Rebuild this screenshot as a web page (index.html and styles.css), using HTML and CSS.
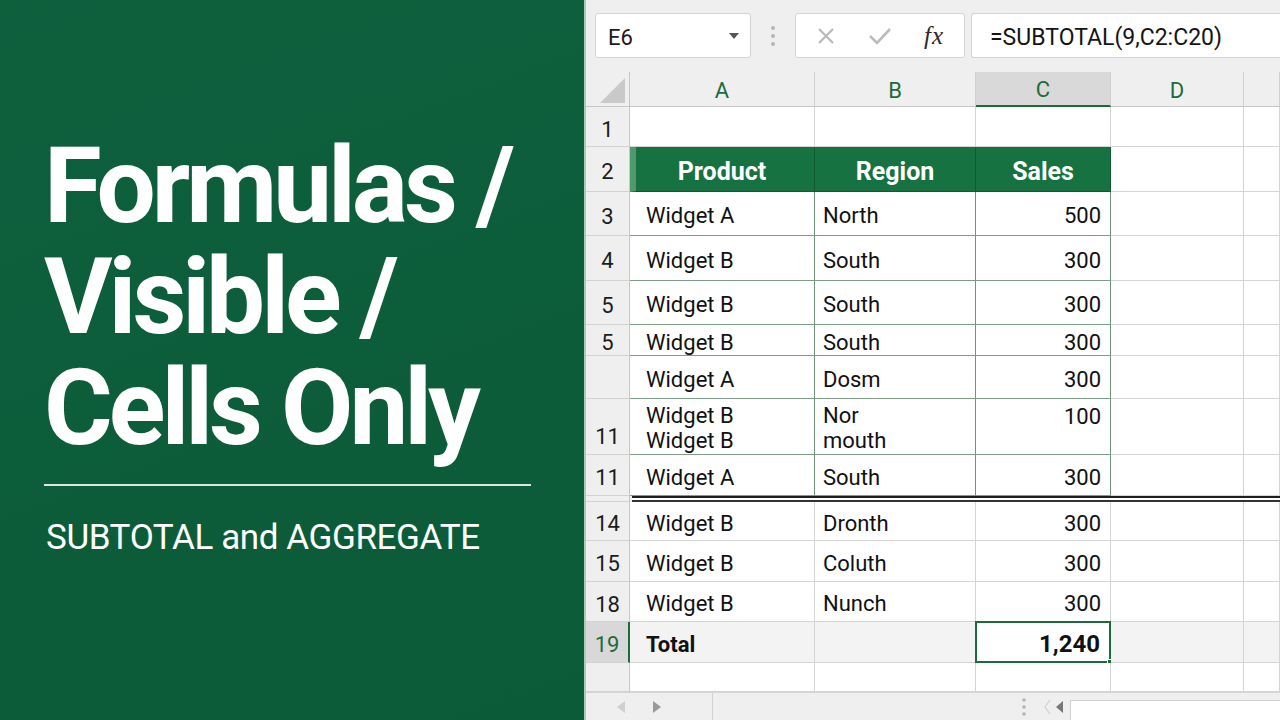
FILE: index.html
```html
<!DOCTYPE html>
<html>
<head>
<meta charset="utf-8">
<link rel="stylesheet" href="styles.css">
</head>
<body>
<div class="page">
  <section class="left">
    <h1 class="title">Formulas /<br>Visible /<br>Cells Only</h1>
    <div class="rule"></div>
    <p class="subtitle">SUBTOTAL and AGGREGATE</p>
  </section>
  <section class="right">
    <div class="toolbar">
      <div class="box namebox">
        <span class="ref">E6</span>
        <svg class="caret" width="12" height="8" viewBox="0 0 12 8"><path d="M1 1 L11 1 L6 7 Z" fill="#555"/></svg>
      </div>
      <svg class="vdots" width="6" height="22" viewBox="0 0 6 22"><circle cx="3" cy="3" r="2" fill="#b4b4b4"/><circle cx="3" cy="11" r="2" fill="#b4b4b4"/><circle cx="3" cy="19" r="2" fill="#b4b4b4"/></svg>
      <div class="box funcbox">
        <svg width="20" height="20" viewBox="0 0 20 20"><path d="M3 3 L17 17 M17 3 L3 17" stroke="#b9b9b9" stroke-width="2.2" fill="none"/></svg>
        <svg width="24" height="20" viewBox="0 0 24 20"><path d="M2 10 L9 17 L22 3" stroke="#bcbcbc" stroke-width="2.6" fill="none"/></svg>
        <span class="fx">fx</span>
      </div>
      <div class="box formula">=SUBTOTAL(9,C2:C20)</div>
    </div>

    <div class="sheet">
      <div class="row colheads">
        <div class="corner"><svg width="28" height="28" viewBox="0 0 28 28"><path d="M2 27 L27 27 L27 2 Z" fill="#c9c9c9"/></svg></div>
        <div class="ch">A</div>
        <div class="ch">B</div>
        <div class="ch sel">C</div>
        <div class="ch">D</div>
        <div class="ch"></div>
      </div>

      <div class="row h40">
        <div class="rh">1</div>
        <div class="c"></div><div class="c"></div><div class="c"></div><div class="c"></div><div class="c"></div>
      </div>

      <div class="row h45">
        <div class="rh">2</div>
        <div class="c hd first">Product</div>
        <div class="c hd">Region</div>
        <div class="c hd">Sales</div>
        <div class="c"></div><div class="c"></div>
      </div>

      <div class="row h44">
        <div class="rh">3</div>
        <div class="c g pa">Widget A</div>
        <div class="c g pb">North</div>
        <div class="c g num">500</div>
        <div class="c"></div><div class="c"></div>
      </div>

      <div class="row h45">
        <div class="rh">4</div>
        <div class="c g pa">Widget B</div>
        <div class="c g pb">South</div>
        <div class="c g num">300</div>
        <div class="c"></div><div class="c"></div>
      </div>

      <div class="row h44">
        <div class="rh">5</div>
        <div class="c g pa">Widget B</div>
        <div class="c g pb">South</div>
        <div class="c g num">300</div>
        <div class="c"></div><div class="c"></div>
      </div>

      <div class="row h31">
        <div class="rh">5</div>
        <div class="c g pa">Widget B</div>
        <div class="c g pb">South</div>
        <div class="c g num">300</div>
        <div class="c"></div><div class="c"></div>
      </div>

      <div class="row h43">
        <div class="rh"></div>
        <div class="c g pa">Widget A</div>
        <div class="c g pb">Dosm</div>
        <div class="c g num">300</div>
        <div class="c"></div><div class="c"></div>
      </div>

      <div class="row h56">
        <div class="rh low">11</div>
        <div class="c g pa two">Widget B<br>Widget B</div>
        <div class="c g pb two">Nor<br>mouth</div>
        <div class="c g num top">100</div>
        <div class="c"></div><div class="c"></div>
      </div>

      <div class="row h41">
        <div class="rh">11</div>
        <div class="c g pa">Widget A</div>
        <div class="c g pb">South</div>
        <div class="c g num">300</div>
        <div class="c"></div><div class="c"></div>
      </div>

      <div class="row h6">
        <div class="rh"></div>
        <div class="dbl"></div>
      </div>

      <div class="row h39">
        <div class="rh">14</div>
        <div class="c pa">Widget B</div>
        <div class="c pb">Dronth</div>
        <div class="c num">300</div>
        <div class="c"></div><div class="c"></div>
      </div>

      <div class="row h41">
        <div class="rh">15</div>
        <div class="c pa">Widget B</div>
        <div class="c pb">Coluth</div>
        <div class="c num">300</div>
        <div class="c"></div><div class="c"></div>
      </div>

      <div class="row h40">
        <div class="rh">18</div>
        <div class="c pa">Widget B</div>
        <div class="c pb">Nunch</div>
        <div class="c num">300</div>
        <div class="c"></div><div class="c"></div>
      </div>

      <div class="row h41 total">
        <div class="rh active">19</div>
        <div class="c pa bold">Total</div>
        <div class="c"></div>
        <div class="c num bold selcell">1,240<span class="handle"></span></div>
        <div class="c"></div><div class="c"></div>
      </div>

      <div class="row h29">
        <div class="rh"></div>
        <div class="c"></div><div class="c"></div><div class="c"></div><div class="c"></div><div class="c"></div>
      </div>
    </div>

    <div class="bottombar">
      <div class="tabnav">
        <svg width="10" height="14" viewBox="0 0 10 14"><path d="M9 1 L1 7 L9 13 Z" fill="#cfcfcf"/></svg>
        <svg width="10" height="14" viewBox="0 0 10 14"><path d="M1 1 L9 7 L1 13 Z" fill="#9a9a9a"/></svg>
      </div>
      <div class="tabspace"></div>
      <svg class="bdots" width="6" height="20" viewBox="0 0 6 20"><circle cx="3" cy="3" r="1.8" fill="#b4b4b4"/><circle cx="3" cy="10" r="1.8" fill="#b4b4b4"/><circle cx="3" cy="17" r="1.8" fill="#b4b4b4"/></svg>
      <div class="scrollnav">
        <svg width="8" height="16" viewBox="0 0 8 16"><path d="M7 1 L2 8 L7 15" stroke="#d0d0d0" stroke-width="1.2" fill="none"/></svg>
        <svg width="9" height="14" viewBox="0 0 9 14"><path d="M8 1 L1 7 L8 13 Z" fill="#777"/></svg>
      </div>
      <div class="hscroll"></div>
    </div>
  </section>
</div>
</body>
</html>
```

FILE: styles.css
```css
* { box-sizing: border-box; }
html, body { margin: 0; padding: 0; }
body {
  width: 1280px;
  height: 720px;
  overflow: hidden;
  font-family: Roboto, "Noto Sans", sans-serif;
}
.page {
  display: flex;
  width: 1280px;
  height: 720px;
}

/* LEFT PANEL */
.left {
  width: 584px;
  flex: none;
  background: #0c5c3a;
  background-image: linear-gradient(160deg, #0e603d 0%, #0b5a38 100%);
  color: #fff;
  padding: 131px 0 0 44px;
  display: flex;
  flex-direction: column;
}
.title {
  margin: 0;
  font-family: Roboto, sans-serif;
  font-weight: 700;
  font-size: 105px;
  line-height: 111px;
  letter-spacing: -4px;
  color: #fff;
}
.rule {
  margin-top: 20px;
  width: 487px;
  height: 2px;
  background: rgba(255,255,255,0.85);
}
.subtitle {
  margin: 32px 0 0 2px;
  font-family: Roboto, sans-serif;
  font-weight: 400;
  font-size: 35px;
  line-height: 40px;
  letter-spacing: -0.4px;
  color: #fff;
}

/* RIGHT PANEL */
.right {
  flex: 1;
  display: flex;
  flex-direction: column;
  background: #efefef;
  border-left: 2px solid #a9cdb5;
}
.toolbar {
  height: 72px;
  display: flex;
  align-items: flex-start;
  padding: 13px 0 0 9px;
}
.box {
  height: 45px;
  background: #fff;
  border: 1px solid #d3d3d3;
  border-radius: 3px;
  display: flex;
  align-items: center;
}
.namebox {
  width: 156px;
  padding: 3px 10px 0 12px;
  justify-content: space-between;
}
.caret { margin-top: -3px; }
.ref {
  font-size: 22px;
  color: #1a1a1a;
}
.vdots {
  margin: 12px 19px 0 19px;
}
.funcbox {
  width: 170px;
  padding: 0 20px 0 20px;
  justify-content: space-between;
}
.fx {
  font-family: "Liberation Serif", "DejaVu Serif", serif;
  font-style: italic;
  font-size: 25px;
  color: #2a2a2a;
  letter-spacing: 1px;
}
.formula {
  flex: 1;
  margin-left: 6px;
  padding: 4px 0 0 18px;
  border-right: none;
  border-radius: 3px 0 0 3px;
  font-size: 23px;
  color: #141414;
}

/* SHEET */
.sheet {
  flex: 1;
  display: flex;
  flex-direction: column;
}
.row {
  display: grid;
  grid-template-columns: 44px 185px 161px 135px 133px 1fr;
}
.colheads { height: 35px; }
.h6 { height: 6px; }
.h29 { height: 29px; }
.h31 { height: 31px; }
.h39 { height: 39px; }
.h40 { height: 40px; }
.h41 { height: 41px; }
.h43 { height: 43px; }
.h44 { height: 44px; }
.h45 { height: 45px; }
.h56 { height: 56px; }

.corner {
  background: #efefef;
  border-right: 1px solid #c6c6c6;
  border-bottom: 1px solid #c6c6c6;
  display: flex;
  align-items: flex-end;
  justify-content: flex-end;
  padding: 0 3px 2px 0;
}
.ch {
  background: #efefef;
  border-right: 1px solid #cfcfcf;
  border-bottom: 1px solid #c6c6c6;
  color: #1d6b3c;
  font-size: 22px;
  padding-top: 2px;
  display: flex;
  align-items: center;
  justify-content: center;
}
.ch.sel {
  background: #d9d9d9;
  border-bottom: 2px solid #1d6b3c;
}
.rh {
  background: #efefef;
  border-right: 1px solid #c6c6c6;
  border-bottom: 1px solid #d2d2d2;
  font-size: 22px;
  color: #1c1c1c;
  padding-top: 5px;
  display: flex;
  align-items: center;
  justify-content: center;
}
.rh.low {
  align-items: flex-end;
  padding-bottom: 5px;
}
.rh.active {
  background: #d8d8d8;
  color: #1d6b3c;
  border-right: 2px solid #1d6b3c;
}
.c {
  background: #fff;
  border-right: 1px solid #d4d4d4;
  border-bottom: 1px solid #d4d4d4;
  font-size: 22px;
  color: #111;
  padding-top: 4px;
  display: flex;
  align-items: center;
  white-space: nowrap;
  position: relative;
}
.c.g {
  border-right-color: #6e957c;
  border-bottom-color: #7d9f88;
}
.c.hd {
  background: #167240;
  color: #fff;
  font-weight: 700;
  font-size: 25px;
  justify-content: center;
  border-right-color: #0f5a33;
  border-bottom-color: #0f5a33;
}
.c.hd.first {
  border-left: 6px solid #4f9a6c;
  padding-right: 6px;
}
.pa { padding-left: 16px; }
.pb { padding-left: 8px; }
.num {
  justify-content: flex-end;
  padding-right: 9px;
}
.num.top {
  align-items: flex-start;
  padding-top: 5px;
}
.two {
  line-height: 25px;
  padding-top: 2px;
}
.bold { font-weight: 700; }
.total .c { background: #f3f3f3; }
.total .selcell {
  background: #fff;
  border: 2px solid #1d6b3c;
  margin-left: -1px;
  margin-top: -1px;
  font-size: 24px;
}
.handle {
  position: absolute;
  right: -5px;
  bottom: -5px;
  width: 7px;
  height: 7px;
  background: #1d6b3c;
  border: 1px solid #fff;
}
.dbl {
  grid-column: 2 / 7;
  margin-left: 2px;
  background: #fff;
  border-top: 2px solid #1e1e1e;
  border-bottom: 2px solid #333;
}

/* BOTTOM BAR */
.bottombar {
  height: 28px;
  flex: none;
  background: #efefef;
  border-top: 1px solid #d6d6d6;
  display: flex;
  align-items: center;
}
.tabnav {
  width: 127px;
  height: 100%;
  display: flex;
  align-items: center;
  gap: 26px;
  padding-left: 30px;
  border-right: 1px solid #d2d2d2;
}
.tabspace { flex: 1; }
.bdots { margin-right: 16px; }
.scrollnav {
  display: flex;
  align-items: center;
  gap: 4px;
  margin-right: 6px;
}
.hscroll {
  width: 210px;
  height: 20px;
  align-self: flex-end;
  background: #fff;
  border: 1px solid #d0d0d0;
  border-right: none;
  border-bottom: none;
}
```
